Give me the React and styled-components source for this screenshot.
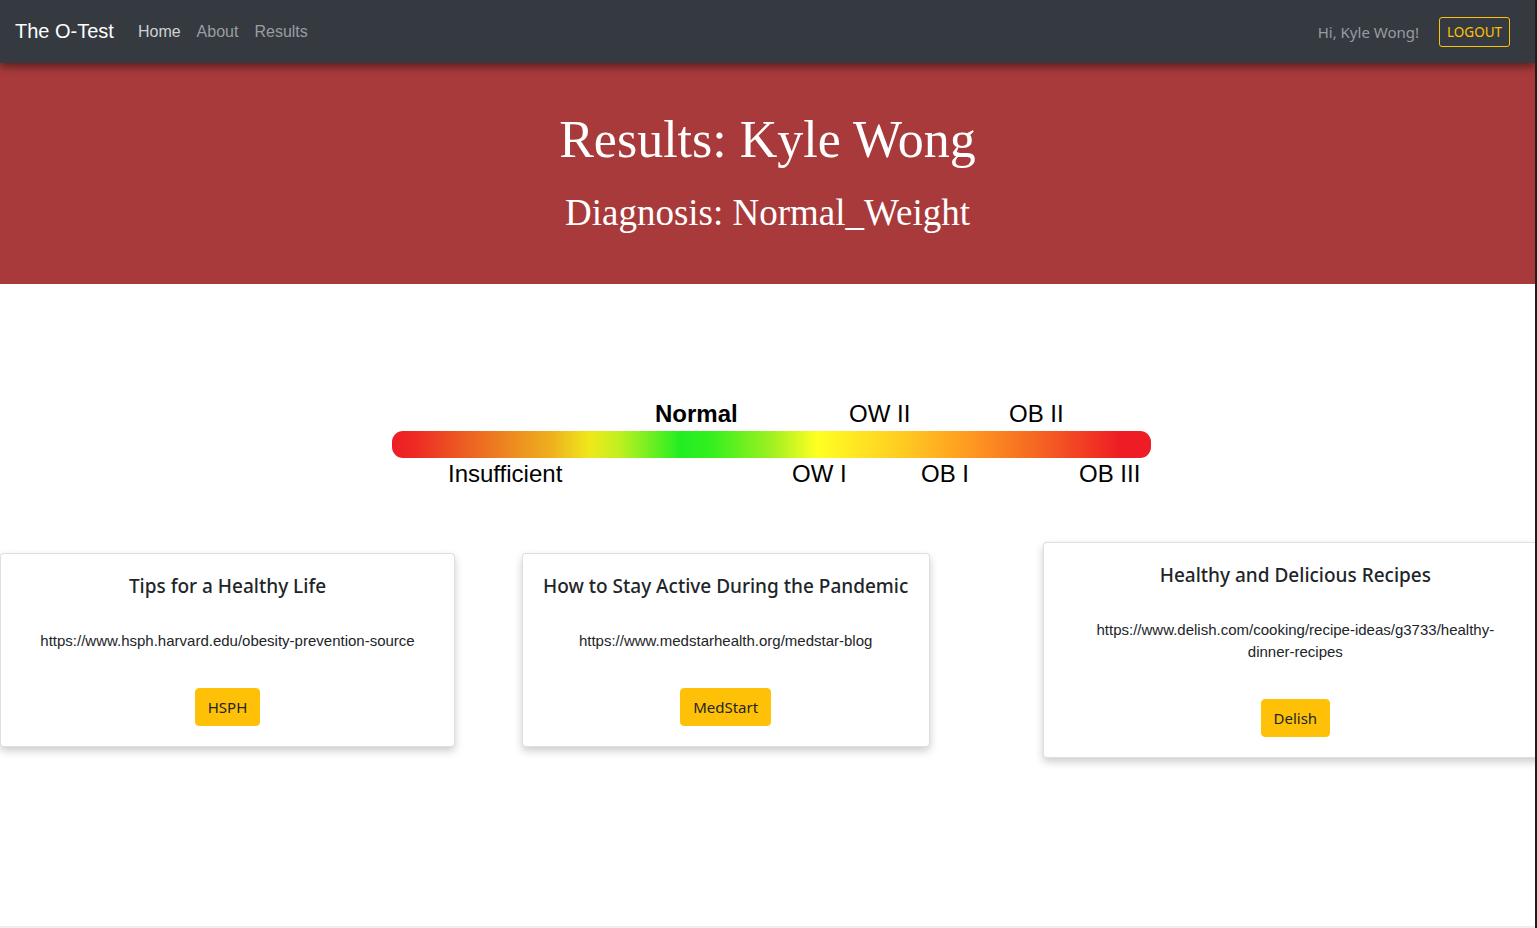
import React from 'react';
import styled, { createGlobalStyle } from 'styled-components';

const GlobalStyle = createGlobalStyle`
  html, body {
    margin: 0;
    padding: 0;
    background: #1e1e1e;
    overflow: hidden;
  }
  #root {
    width: calc(100% - 2px);
    min-height: 100vh;
    background: white;
    overflow: hidden;
  }
  * {
    box-sizing: border-box;
  }
`

const Page = styled.div`
  min-height: 100vh;
  display: flex;
  flex-direction: column;
`

const NavBar = styled.nav`
  height: 63px;
  background-color: #343a40;
  display: flex;
  align-items: center;
  padding: 0 25px 0 15px;
  box-shadow: 0 4px 8px rgba(0, 0, 0, 0.45);
  position: relative;
  z-index: 10;
  font-family: "Liberation Sans", Arial, sans-serif;
`

const Brand = styled.div`
  font-size: 20px;
  color: white;
  margin-right: 16px;
`

const NavLink = styled.a`
  font-size: 16px;
  padding: 0 8px;
  color: ${p => (p.$active ? '#cfd1d3' : '#9a9da0')};
  text-decoration: none;
`

const Spacer = styled.div`
  flex: 1;
`

const Greeting = styled.span`
  font-family: "Noto Sans", "Open Sans", sans-serif;
  font-size: 15px;
  color: #999ca0;
  margin-right: 20px;
`

const LogoutButton = styled.button`
  font-family: "Noto Sans", "Open Sans", sans-serif;
  font-size: 13.5px;
  color: #ffc107;
  background: transparent;
  border: 1px solid #ffc107;
  border-radius: 3px;
  height: 30px;
  width: 71px;
  padding: 0;
`

const Banner = styled.header`
  background-color: #a83a3b;
  color: white;
  text-align: center;
  padding: 46px 0 50px;
  font-family: "Liberation Serif", "Times New Roman", serif;
`

const Title = styled.h1`
  margin: 0 0 21px;
  font-size: 52px;
  font-weight: normal;
  line-height: 62px;
`

const SubTitle = styled.h2`
  margin: 0;
  font-size: 37px;
  font-weight: normal;
  line-height: 42px;
`

const Main = styled.main`
  flex: 1;
  display: flex;
  flex-direction: column;
  padding-top: 116px;
`

const Scale = styled.div`
  width: 759px;
  margin: 0 auto;
  position: relative;
  left: 4px;
  font-family: "Liberation Sans", Arial, sans-serif;
  color: black;
`

const LabelRow = styled.div`
  position: relative;
  height: 28px;
  margin: ${p => (p.$top ? '0 0 3px' : '2px 0 0')};
`

const ScaleLabel = styled.span`
  position: absolute;
  top: 0;
  font-size: 24px;
  line-height: 28px;
  white-space: nowrap;
  font-weight: ${p => (p.$bold ? 'bold' : 'normal')};
`

const GradientBar = styled.div`
  height: 27px;
  border-radius: 11px;
  background: linear-gradient(
    to right,
    #ee1c25 0%,
    #ee2a24 3%,
    #ec5a22 9%,
    #eeb01e 21%,
    #f0e81a 26%,
    #c0f020 30%,
    #22ee22 38%,
    #33f01e 42%,
    #a0f020 50%,
    #ffff22 56%,
    #ffcc22 67%,
    #ff9a20 76%,
    #f56622 85%,
    #ee1c25 96%,
    #ee1c25 100%
  );
`

const CardRow = styled.div`
  display: grid;
  grid-template-columns: repeat(3, minmax(0, 1fr));
  align-items: center;
  margin-top: 54px;
`

const Card = styled.div`
  width: ${p => p.$width}px;
  margin-left: ${p => p.$offset}px;
  background: white;
  border: 1px solid rgba(0, 0, 0, 0.125);
  border-radius: 4px;
  box-shadow: 0 4px 8px rgba(0, 0, 0, 0.2);
  padding: 20px ${p => p.$padX}px;
  text-align: center;
`

const CardTitle = styled.h5`
  margin: 0 0 32px;
  font-family: "Noto Sans", "Open Sans", sans-serif;
  font-size: 19px;
  font-weight: 500;
  line-height: 24px;
  color: #212529;
  white-space: nowrap;
`

const CardLink = styled.p`
  margin: 0 0 36px;
  font-family: "Liberation Sans", Arial, sans-serif;
  font-size: 15px;
  line-height: 22px;
  color: #212529;
`

const WarnButton = styled.button`
  font-family: "Noto Sans", "Open Sans", sans-serif;
  font-size: 15px;
  line-height: 24px;
  color: #212529;
  background-color: #ffc107;
  border: 1px solid #ffc107;
  border-radius: 4px;
  padding: 6px 12px;
`

const Footer = styled.footer`
  height: 2px;
  background: #eeeeee;
`

const topLabels = [
  { text: 'Normal', left: 263, bold: true },
  { text: 'OW II', left: 457 },
  { text: 'OB II', left: 617 },
]

const bottomLabels = [
  { text: 'Insufficient', left: 56 },
  { text: 'OW I', left: 400 },
  { text: 'OB I', left: 529 },
  { text: 'OB III', left: 687 },
]

const cards = [
  {
    title: 'Tips for a Healthy Life',
    url: 'https://www.hsph.harvard.edu/obesity-prevention-source',
    button: 'HSPH',
    width: 455,
    offset: 0,
    padX: 20,
  },
  {
    title: 'How to Stay Active During the Pandemic',
    url: 'https://www.medstarhealth.org/medstar-blog',
    button: 'MedStart',
    width: 408,
    offset: 10,
    padX: 19,
  },
  {
    title: 'Healthy and Delicious Recipes',
    url: 'https://www.delish.com/cooking/recipe-ideas/g3733/healthy-dinner-recipes',
    button: 'Delish',
    width: 504,
    offset: 20,
    padX: 34,
  },
]

export default function App() {
  return (
    <Page>
      <GlobalStyle />
      <NavBar>
        <Brand>The O-Test</Brand>
        <NavLink $active>Home</NavLink>
        <NavLink>About</NavLink>
        <NavLink>Results</NavLink>
        <Spacer />
        <Greeting>Hi, Kyle Wong!</Greeting>
        <LogoutButton>LOGOUT</LogoutButton>
      </NavBar>
      <Banner>
        <Title>Results: Kyle Wong</Title>
        <SubTitle>Diagnosis: Normal_Weight</SubTitle>
      </Banner>
      <Main>
        <Scale>
          <LabelRow $top>
            {topLabels.map(l => (
              <ScaleLabel key={l.text} $bold={l.bold} style={{ left: l.left }}>
                {l.text}
              </ScaleLabel>
            ))}
          </LabelRow>
          <GradientBar />
          <LabelRow>
            {bottomLabels.map(l => (
              <ScaleLabel key={l.text} style={{ left: l.left }}>
                {l.text}
              </ScaleLabel>
            ))}
          </LabelRow>
        </Scale>
        <CardRow>
          {cards.map(c => (
            <Card key={c.title} $width={c.width} $offset={c.offset} $padX={c.padX}>
              <CardTitle>{c.title}</CardTitle>
              <CardLink>{c.url}</CardLink>
              <WarnButton>{c.button}</WarnButton>
            </Card>
          ))}
        </CardRow>
      </Main>
      <Footer />
    </Page>
  )
}
